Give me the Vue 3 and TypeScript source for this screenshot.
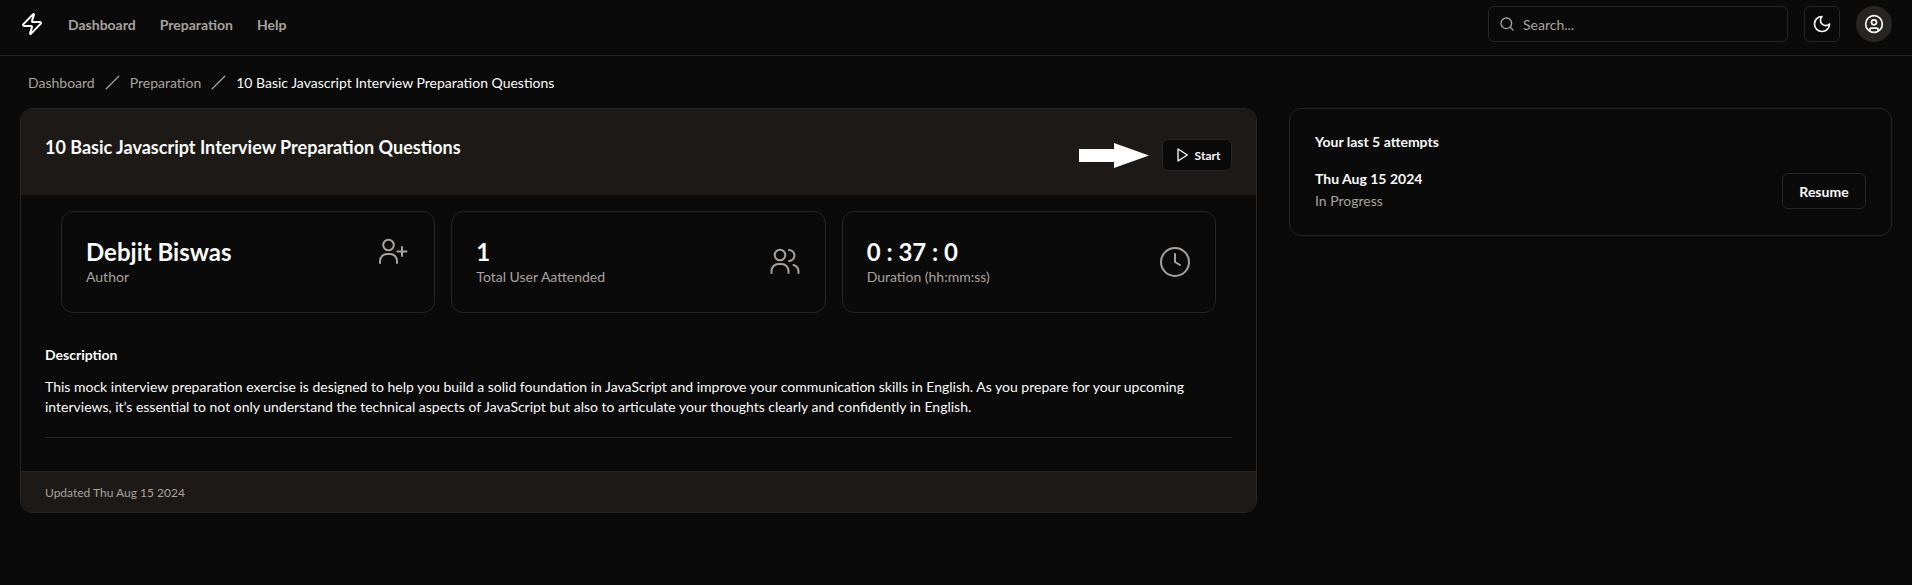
<script setup lang="ts">
const navLinks: string[] = ['Dashboard', 'Preparation', 'Help']
const title = '10 Basic Javascript Interview Preparation Questions'

interface Stat {
  value: string
  label: string
  icon: 'author' | 'users' | 'clock'
}

const stats: Stat[] = [
  { value: 'Debjit Biswas', label: 'Author', icon: 'author' },
  { value: '1', label: 'Total User Aattended', icon: 'users' },
  { value: '0 : 37 : 0', label: 'Duration (hh:mm:ss)', icon: 'clock' }
]
</script>

<template>
  <div class="page">
    <header class="topbar">
      <svg class="logo" viewBox="0 0 24 24" fill="none" stroke="currentColor" stroke-width="2" stroke-linecap="round" stroke-linejoin="round">
        <path d="M4 14a1 1 0 0 1-.78-1.63l9.9-10.2a.5.5 0 0 1 .86.46l-1.92 6.02A1 1 0 0 0 13 10h7a1 1 0 0 1 .78 1.63l-9.9 10.2a.5.5 0 0 1-.86-.46l1.92-6.02A1 1 0 0 0 11 14z" />
      </svg>
      <nav class="nav">
        <a v-for="link in navLinks" :key="link" class="nav-link">{{ link }}</a>
      </nav>
      <div class="topbar-right">
        <div class="search">
          <svg class="search-icon" viewBox="0 0 24 24" fill="none" stroke="currentColor" stroke-width="2" stroke-linecap="round" stroke-linejoin="round">
            <circle cx="11" cy="11" r="8" />
            <path d="m21 21-4.3-4.3" />
          </svg>
          <span>Search...</span>
        </div>
        <button class="icon-btn">
          <svg viewBox="0 0 24 24" fill="none" stroke="currentColor" stroke-width="2" stroke-linecap="round" stroke-linejoin="round">
            <path d="M12 3a6 6 0 0 0 9 9 9 9 0 1 1-9-9Z" />
          </svg>
        </button>
        <button class="avatar">
          <svg viewBox="0 0 24 24" fill="none" stroke="currentColor" stroke-width="2" stroke-linecap="round" stroke-linejoin="round">
            <circle cx="12" cy="12" r="10" />
            <circle cx="12" cy="10" r="3" />
            <path d="M7 20.662V19a2 2 0 0 1 2-2h6a2 2 0 0 1 2 2v1.662" />
          </svg>
        </button>
      </div>
    </header>

    <div class="crumbs">
      <span>Dashboard</span>
      <svg class="slash" viewBox="0 0 24 24" fill="none" stroke="currentColor" stroke-width="2" stroke-linecap="round"><path d="M22 2 2 22" /></svg>
      <span>Preparation</span>
      <svg class="slash" viewBox="0 0 24 24" fill="none" stroke="currentColor" stroke-width="2" stroke-linecap="round"><path d="M22 2 2 22" /></svg>
      <span class="crumb-current">{{ title }}</span>
    </div>

    <main class="layout">
      <section class="card">
        <div class="card-head">
          <h1 class="card-title">{{ title }}</h1>
          <div class="start-wrap">
            <svg class="arrow" viewBox="0 0 70 25">
              <polygon points="0,6 35,6 35,0 70,12.5 35,25 35,19 0,19" fill="#fff" />
            </svg>
            <button class="start-btn">
              <svg viewBox="0 0 24 24" fill="none" stroke="currentColor" stroke-width="2" stroke-linecap="round" stroke-linejoin="round">
                <polygon points="6 3 20 12 6 21 6 3" />
              </svg>
              Start
            </button>
          </div>
        </div>

        <div class="card-body">
          <div class="stats">
            <div v-for="stat in stats" :key="stat.label" class="stat">
              <div>
                <div class="stat-value">{{ stat.value }}</div>
                <div class="stat-label">{{ stat.label }}</div>
              </div>
              <svg v-if="stat.icon === 'author'" class="stat-icon author-icon" viewBox="0 0 32 32" fill="none" stroke="currentColor" stroke-width="2" stroke-linecap="round" stroke-linejoin="round">
                <circle cx="10.5" cy="7" r="5.3" />
                <path d="M2 25v-2a7 7 0 0 1 7-7h3a7 7 0 0 1 7 7v2" />
                <path d="M24 9v9M19.5 13.5h9" />
              </svg>
              <svg v-else-if="stat.icon === 'users'" class="stat-icon" viewBox="0 0 32 32" fill="none" stroke="currentColor" stroke-width="2" stroke-linecap="round" stroke-linejoin="round">
                <circle cx="11" cy="9" r="5.3" />
                <path d="M20 4a5.5 5.5 0 0 1 0 11" />
                <path d="M2.5 27v-2a7 7 0 0 1 7-7h3a7 7 0 0 1 7 7v2" />
                <path d="M24.5 19a7 7 0 0 1 5 7v1" />
              </svg>
              <svg v-else class="stat-icon" viewBox="0 0 32 32" fill="none" stroke="currentColor" stroke-width="2" stroke-linecap="round" stroke-linejoin="round">
                <circle cx="16" cy="16" r="14" />
                <path d="M16 8v8l5 3" />
              </svg>
            </div>
          </div>

          <h2 class="desc-title">Description</h2>
          <p class="desc">This mock interview preparation exercise is designed to help you build a solid foundation in JavaScript and improve your communication skills in English. As you prepare for your upcoming interviews, it’s essential to not only understand the technical aspects of JavaScript but also to articulate your thoughts clearly and confidently in English.</p>
          <hr class="rule" />
        </div>

        <div class="card-foot">Updated Thu Aug 15 2024</div>
      </section>

      <aside class="attempts">
        <h2 class="attempts-title">Your last 5 attempts</h2>
        <div class="attempt">
          <div>
            <div class="attempt-date">Thu Aug 15 2024</div>
            <div class="attempt-status">In Progress</div>
          </div>
          <button class="resume-btn">Resume</button>
        </div>
      </aside>
    </main>
  </div>
</template>

<style>
html,
body {
  margin: 0;
  background: #0a0a0a;
}
</style>

<style scoped>
.page {
  height: 585px;
  overflow: hidden;
  background: #0a0a0a;
  color: #fafaf9;
  font-family: Lato, "Noto Sans", sans-serif;
  font-size: 14px;
}

button {
  font-family: inherit;
  cursor: pointer;
}

.topbar {
  display: flex;
  align-items: center;
  box-sizing: border-box;
  height: 56px;
  padding: 0 20px 7px;
  border-bottom: 1px solid #292524;
}

.logo {
  width: 24px;
  height: 24px;
  color: #fff;
}

.nav {
  display: flex;
  gap: 24px;
  margin-left: 24px;
}

.nav-link {
  color: #a8a29e;
  font-weight: 700;
}

.topbar-right {
  display: flex;
  align-items: center;
  margin-left: auto;
}

.search {
  display: flex;
  align-items: center;
  gap: 8px;
  box-sizing: border-box;
  width: 300px;
  height: 36px;
  padding: 0 10px;
  border: 1px solid #292524;
  border-radius: 6px;
  color: #a8a29e;
}

.search-icon {
  width: 16px;
  height: 16px;
}

.icon-btn {
  display: flex;
  align-items: center;
  justify-content: center;
  box-sizing: border-box;
  width: 36px;
  height: 36px;
  margin-left: 16px;
  padding: 0;
  border: 1px solid #292524;
  border-radius: 6px;
  background: #0a0a0a;
  color: #fafaf9;
}

.icon-btn svg,
.avatar svg {
  width: 20px;
  height: 20px;
}

.avatar {
  display: flex;
  align-items: center;
  justify-content: center;
  width: 36px;
  height: 36px;
  margin-left: 16px;
  padding: 0;
  border: 0;
  border-radius: 50%;
  background: #292524;
  color: #fafaf9;
}

.crumbs {
  display: flex;
  align-items: center;
  gap: 10px;
  height: 52px;
  padding: 0 28px;
  color: #a8a29e;
}

.slash {
  width: 15px;
  height: 15px;
}

.crumb-current {
  color: #fafaf9;
}

.layout {
  display: grid;
  grid-template-columns: 1237px 603px;
  gap: 32px;
  align-items: start;
  padding: 0 20px;
}

.card {
  overflow: hidden;
  border: 1px solid #292524;
  border-radius: 12px;
}

.card-head {
  display: flex;
  justify-content: space-between;
  align-items: flex-start;
  height: 86px;
  padding: 24px 24px 0;
  box-sizing: border-box;
  background: #1c1917;
}

.card-title {
  margin: 0;
  font-size: 18px;
  font-weight: 700;
  line-height: 28px;
}

.start-wrap {
  display: flex;
  align-items: center;
  gap: 13px;
  margin-top: 6px;
}

.arrow {
  width: 70px;
  height: 25px;
}

.start-btn {
  display: flex;
  align-items: center;
  justify-content: center;
  gap: 5px;
  box-sizing: border-box;
  width: 70px;
  height: 32px;
  padding: 0;
  border: 1px solid #292524;
  border-radius: 6px;
  background: #0a0a0a;
  color: #fafaf9;
  font-size: 12px;
  font-weight: 700;
}

.start-btn svg {
  width: 16px;
  height: 16px;
}

.card-body {
  padding: 16px 24px 33px;
}

.stats {
  display: grid;
  grid-template-columns: repeat(3, 1fr);
  gap: 16px;
  margin: 0 16px;
}

.stat {
  display: flex;
  justify-content: space-between;
  align-items: center;
  box-sizing: border-box;
  height: 102px;
  padding: 0 24px;
  border: 1px solid #292524;
  border-radius: 12px;
}

.stat-value {
  font-size: 24px;
  font-weight: 700;
  line-height: 28px;
}

.stat-label {
  margin-top: 1px;
  color: #a8a29e;
  line-height: 20px;
}

.stat-icon {
  width: 32px;
  height: 32px;
  color: #a8a29e;
}

.author-icon {
  align-self: flex-start;
  margin-top: 26px;
}

.desc-title {
  margin: 32px 0 0;
  font-size: 14px;
  font-weight: 700;
  line-height: 20px;
}

.desc {
  margin: 12px 0 0;
  line-height: 20px;
}

.rule {
  height: 1px;
  margin: 20px 0 0;
  border: 0;
  background: #292524;
}

.card-foot {
  display: flex;
  align-items: center;
  height: 40px;
  padding: 0 24px;
  border-top: 1px solid #292524;
  background: #1c1917;
  color: #a8a29e;
  font-size: 12px;
}

.attempts {
  box-sizing: border-box;
  height: 128px;
  padding: 23px 25px 0;
  border: 1px solid #292524;
  border-radius: 12px;
}

.attempts-title {
  margin: 0;
  font-size: 14px;
  font-weight: 700;
  line-height: 20px;
}

.attempt {
  display: flex;
  justify-content: space-between;
  align-items: center;
  margin-top: 16px;
}

.attempt-date {
  font-weight: 700;
  line-height: 22px;
}

.attempt-status {
  color: #a8a29e;
  line-height: 22px;
}

.resume-btn {
  height: 36px;
  width: 84px;
  margin-top: 2px;
  padding: 0;
  border: 1px solid #292524;
  border-radius: 6px;
  background: #0a0a0a;
  color: #fafaf9;
  font-size: 14px;
  font-weight: 700;
}
</style>
